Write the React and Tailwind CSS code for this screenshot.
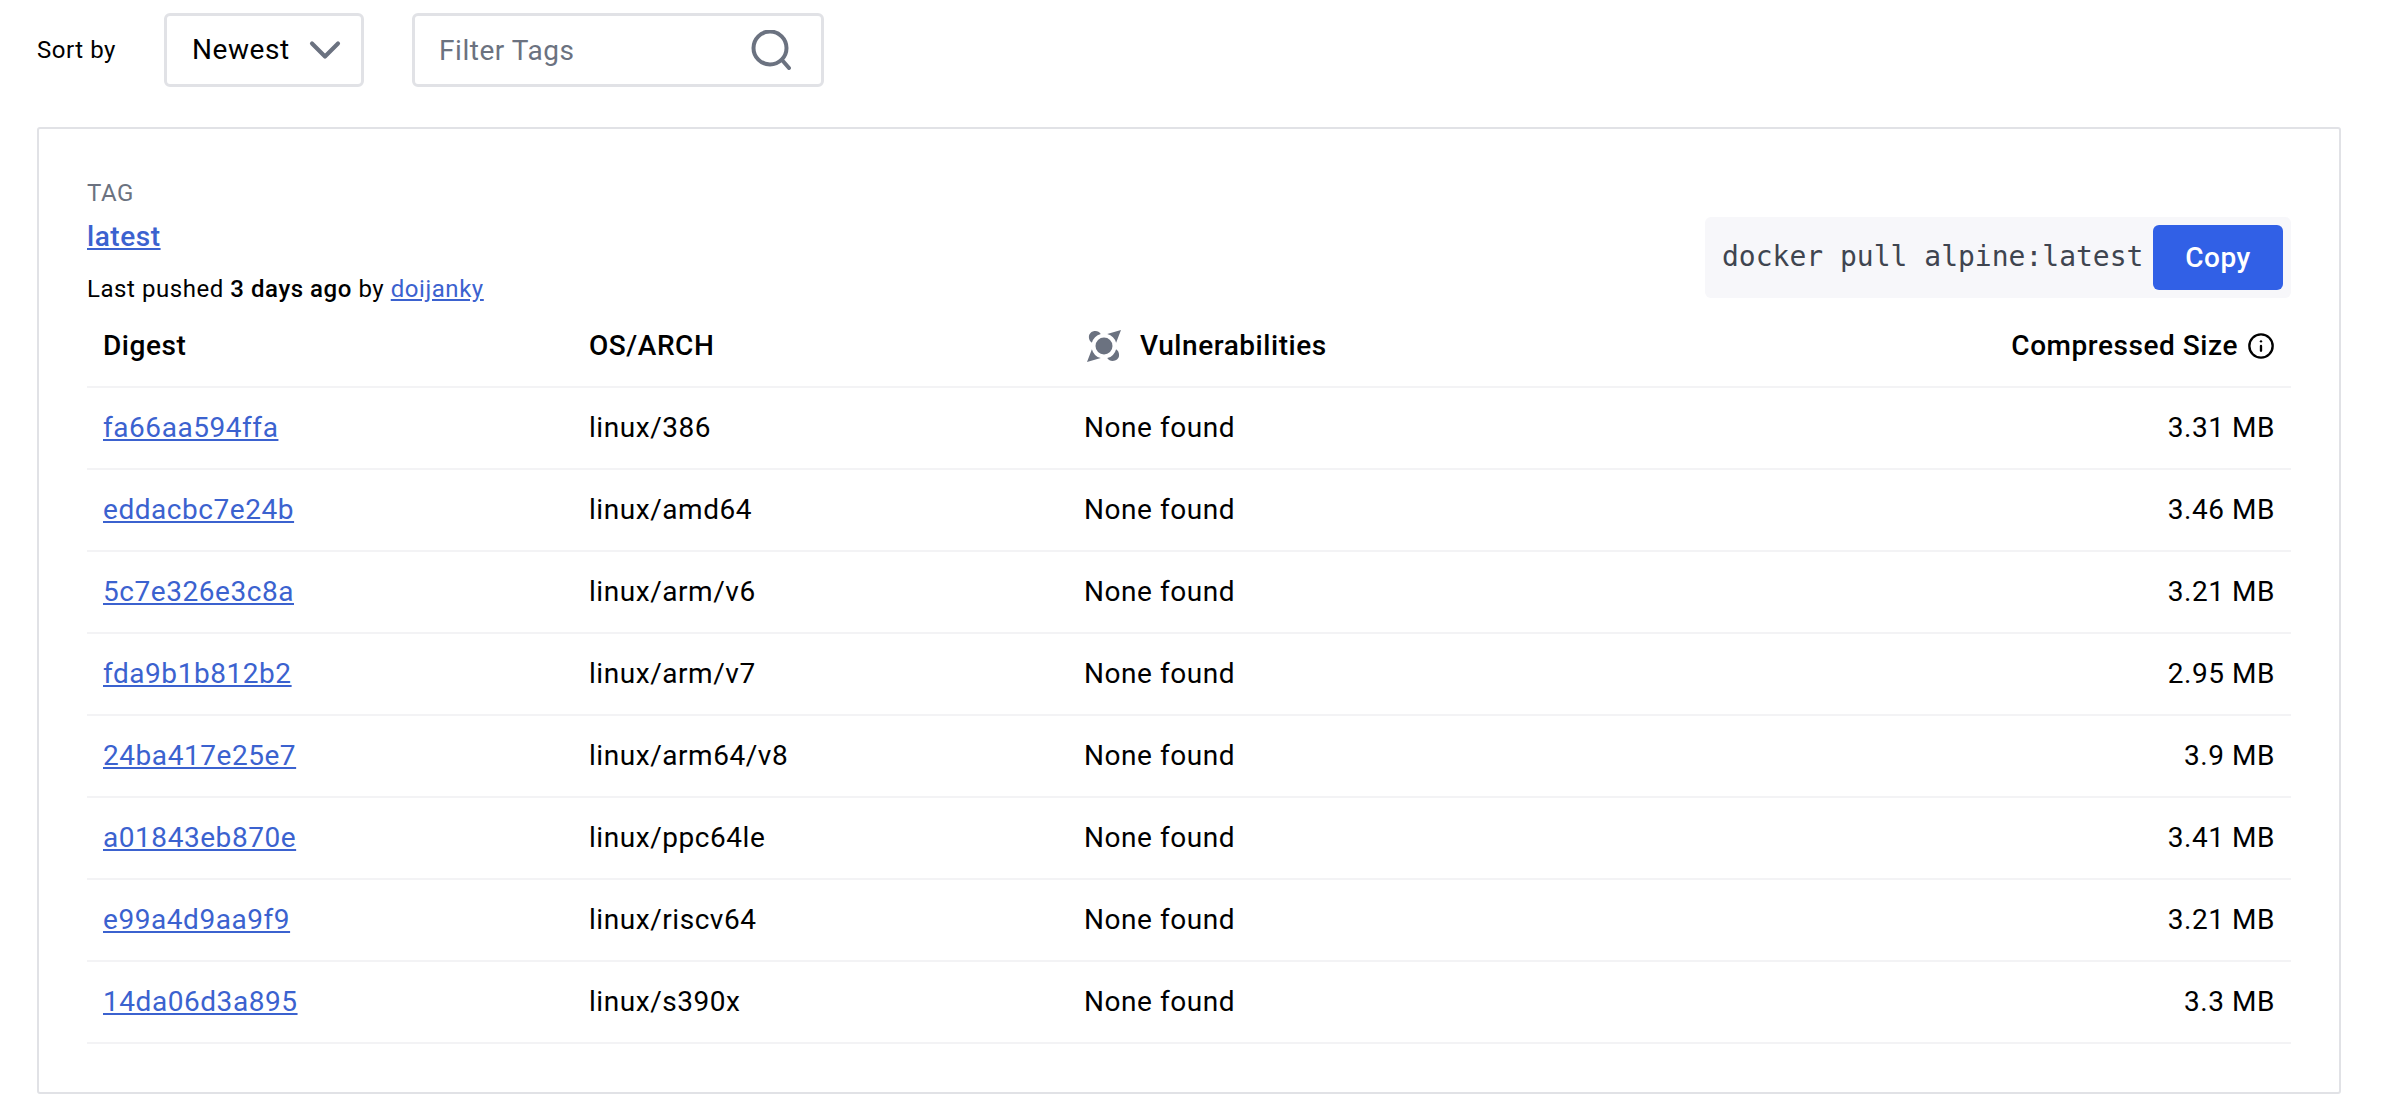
import React from 'react'
import { ChevronDown, Info } from 'lucide-react'

const rows = [
  ['fa66aa594ffa', 'linux/386', '3.31 MB'],
  ['eddacbc7e24b', 'linux/amd64', '3.46 MB'],
  ['5c7e326e3c8a', 'linux/arm/v6', '3.21 MB'],
  ['fda9b1b812b2', 'linux/arm/v7', '2.95 MB'],
  ['24ba417e25e7', 'linux/arm64/v8', '3.9 MB'],
  ['a01843eb870e', 'linux/ppc64le', '3.41 MB'],
  ['e99a4d9aa9f9', 'linux/riscv64', '3.21 MB'],
  ['14da06d3a895', 'linux/s390x', '3.3 MB'],
]

function ScoutIcon() {
  return (
    <svg width="36" height="36" viewBox="0 0 36 36" fill="#6b7280" className="ml-[2px]">
      <circle cx="18" cy="18" r="8.5" />
      <path d="M35 2 L30.1 14.8 A12.5 12.5 0 0 0 21.2 5.9 Z" />
      <path d="M1 34 L5.9 21.2 A12.5 12.5 0 0 0 14.8 30.1 Z" />
      <path d="M14.8 5.9 A12.5 12.5 0 0 0 5.9 14.8 L4 13 C2 9 3 6 5 4.5 C7 3 10 2.5 13 4 Z" />
      <path d="M21.2 30.1 A12.5 12.5 0 0 0 30.1 21.2 L32 23 C34 27 33 30 31 31.5 C29 33 26 33.5 23 32 Z" />
    </svg>
  )
}

function SearchIcon() {
  return (
    <svg width="40" height="40" viewBox="0 0 40 40" fill="none" stroke="#6b7280" strokeWidth="4" strokeLinecap="round">
      <circle cx="19" cy="18" r="16.5" />
      <path d="M31 30 L38 38" />
    </svg>
  )
}

export default function App() {
  return (
    <div className="w-full min-h-[1118px] bg-white pl-[37px] pt-[13px] text-black tracking-[0.55px] font-['Roboto',sans-serif]">
      {/* Filters */}
      <div className="flex items-center h-[74px]">
        <span className="text-[24px] w-[127px]">Sort by</span>
        <div className="flex items-center justify-between w-[200px] h-[74px] border-[3px] border-[#e1e2e6] rounded-[6px] pl-[25px] pr-[10px] text-[28px]">
          Newest
          <ChevronDown size={52} strokeWidth={1.9} className="text-[#6b7280]" />
        </div>
        <div className="flex items-center justify-between w-[412px] h-[74px] ml-[48px] border-[3px] border-[#e1e2e6] rounded-[6px] pl-[24px] pr-[30px] text-[28px] text-[#6b7280]">
          <span className="pt-[1px]">Filter Tags</span>
          <SearchIcon />
        </div>
      </div>

      {/* Tag card */}
      <div className="mt-[40px] w-[2304px] h-[967px] border-2 border-[#e1e2e6] rounded-[3px] pt-[47px] px-[48px]">
        <div className="flex justify-between">
          <div>
            <div className="text-[24px] leading-[34px] text-[#6b7280] uppercase">Tag</div>
            <a className="block text-[28px] leading-[42px] mt-[6px] font-medium text-[#3b62cf] underline">latest</a>
            <div className="text-[24px] leading-[34px] mt-[14px]">
              Last pushed <span className="font-medium">3 days ago</span> by <a className="text-[#3b62cf] underline">doijanky</a>
            </div>
          </div>
          <div className="flex items-center self-start h-[81px] mt-[41px] w-[586px] bg-[#f7f7fa] rounded-[6px] pl-[17px] pr-[8px]">
            <code className="text-[28px] tracking-normal mb-[2px] text-[#3f4550] font-['DejaVu_Sans_Mono',monospace] whitespace-nowrap">docker pull alpine:latest</code>
            <button className="ml-auto w-[130px] h-[65px] rounded-[6px] bg-[#3160e6] text-white text-[28px] font-medium">Copy</button>
          </div>
        </div>

        {/* Table */}
        <div className="grid grid-cols-[486px_495px_1fr] items-center h-[82px] border-b-2 border-[#f3f3f5] text-[28px] font-medium">
          <div className="pl-[16px]">Digest</div>
          <div className="pl-[16px]">OS/ARCH</div>
          <div className="flex justify-between items-center pl-[16px] pr-[16px]">
            <div className="flex items-center gap-[18px]">
              <ScoutIcon />
              Vulnerabilities
            </div>
            <div className="flex items-center gap-[9px]">
              Compressed Size
              <Info size={28} strokeWidth={2} />
            </div>
          </div>
        </div>
        {rows.map(([digest, arch, size]) => (
          <div key={digest} className="grid grid-cols-[486px_495px_1fr] items-center h-[82px] border-b-2 border-[#f3f3f5] text-[28px]">
            <a className="pl-[16px]"><span className="text-[#3b62cf] underline">{digest}</span></a>
            <div className="pl-[16px]">{arch}</div>
            <div className="flex justify-between pl-[16px] pr-[16px]">
              <span>None found</span>
              <span>{size}</span>
            </div>
          </div>
        ))}
      </div>
    </div>
  )
}
